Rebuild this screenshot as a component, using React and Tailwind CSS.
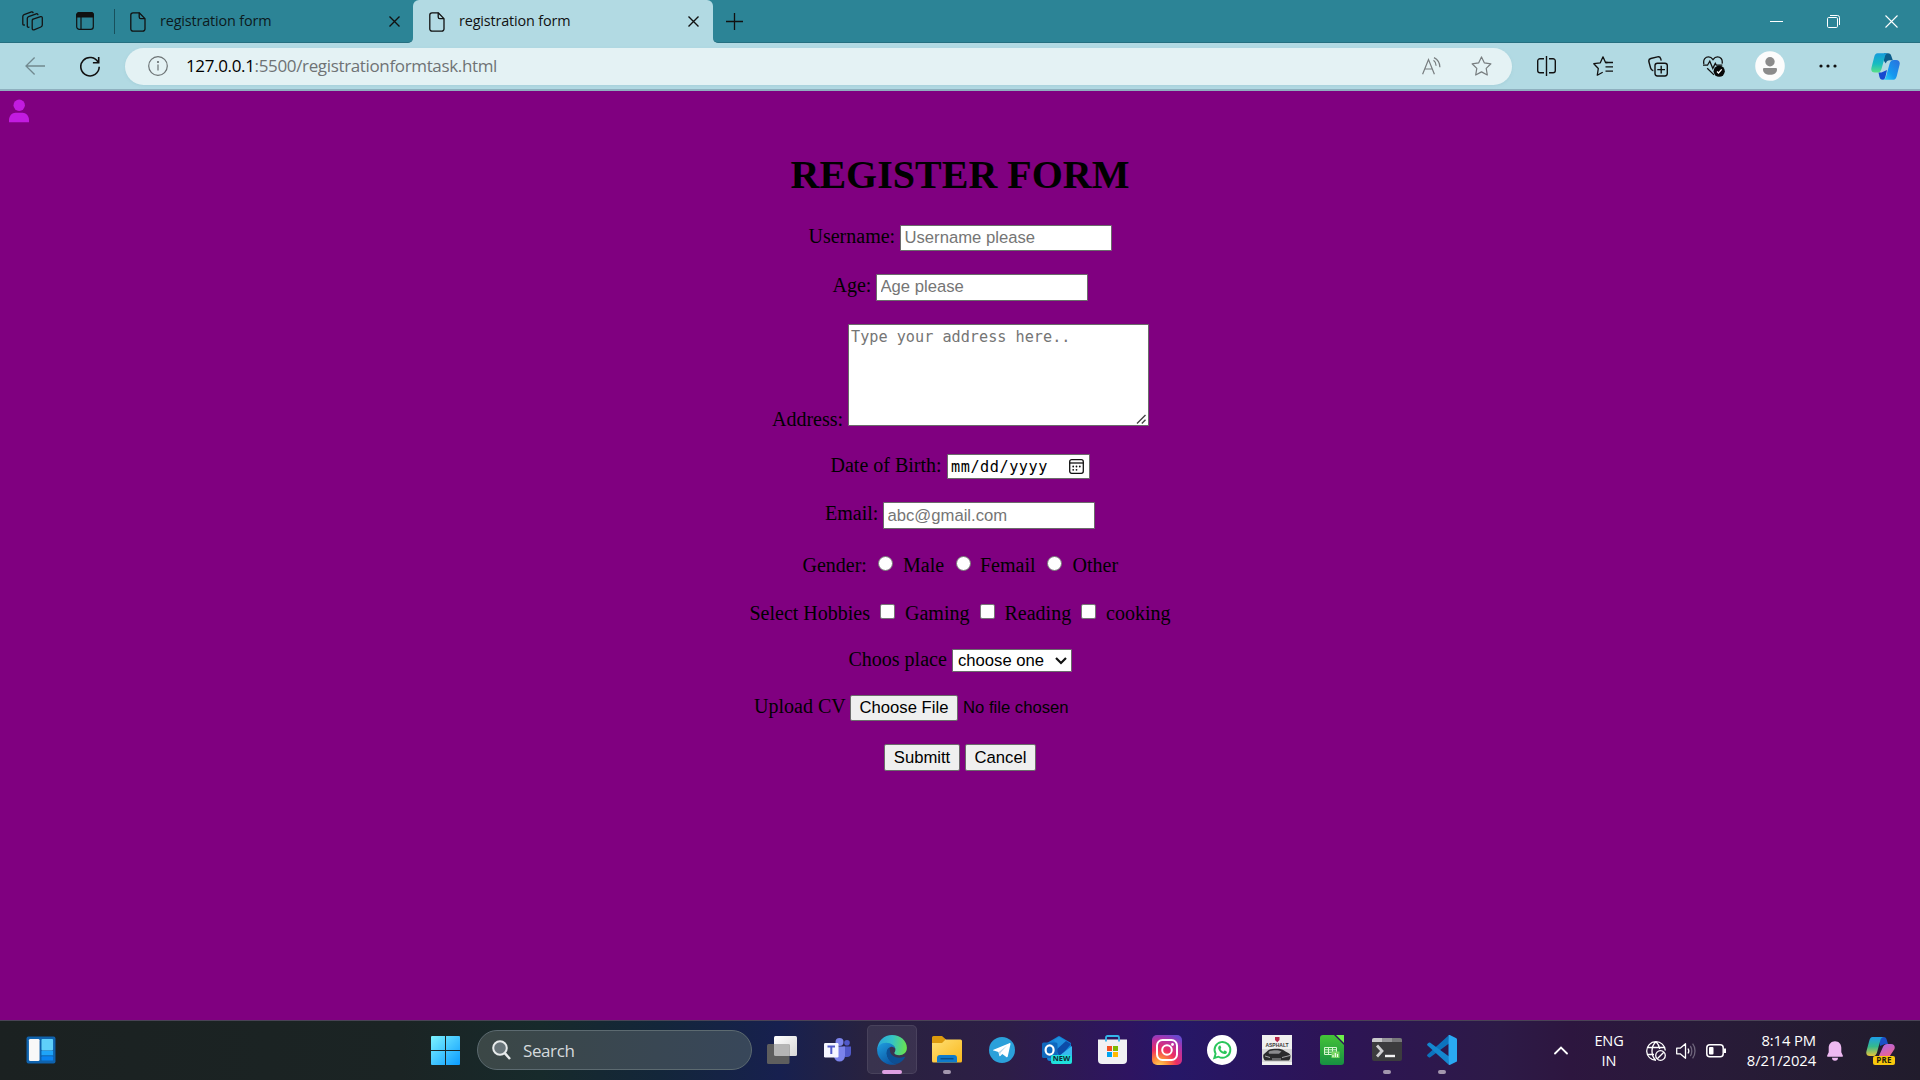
import React from "react";

const serif = "font-['Liberation_Serif',serif]";
const sans = "font-['Liberation_Sans',sans-serif]";
const ui = "font-['Open_Sans',sans-serif]";

function PageIcon() {
  return (
    <svg width="16" height="20" viewBox="0 0 16 20" fill="none" stroke="#111" strokeWidth="1.3" strokeLinejoin="round">
      <path d="M3 .8h6.2L15 6.6V17a2.2 2.2 0 0 1-2.2 2.2H3A2.2 2.2 0 0 1 .8 17V3A2.2 2.2 0 0 1 3 .8Z" />
      <path d="M9.2.8V5a1.6 1.6 0 0 0 1.6 1.6H15" />
    </svg>
  );
}

function CloseIcon() {
  return (
    <svg width="11" height="11" viewBox="0 0 11 11" stroke="#111" strokeWidth="1.4">
      <path d="M.5.5l10 10M10.5.5l-10 10" />
    </svg>
  );
}

function TabStrip() {
  return (
    <div className="flex h-[43px] bg-[#b2dae3]">
      <div className="flex h-[43px] w-[413px] items-center rounded-br-[5px] border-b border-[#256f80] bg-[#2c8496]">
        <svg className="ml-[22px]" width="21" height="20" viewBox="0 0 21 20" fill="none" stroke="#141414" strokeWidth="1.3" strokeLinejoin="round" strokeLinecap="round">
          <path d="M10.4 8.4 18.6 5.6a1.3 1.3 0 0 1 1.7 1.2v7.2a2.2 2.2 0 0 1-1.4 2l-6.9 2.8a1.3 1.3 0 0 1-1.8-1.2V9.6a1.3 1.3 0 0 1 .8-1.2Z" />
          <path d="M7 16.2l-.6.1a1.2 1.2 0 0 1-1.1-1.3V7.6a2 2 0 0 1 1.3-1.9l7.6-2.9a1.3 1.3 0 0 1 1.7.9" />
          <path d="M2.4 14l-.6.1A1.2 1.2 0 0 1 .8 12.8V5.6a2 2 0 0 1 1.3-1.9l7.4-2.8a1.3 1.3 0 0 1 1.6.8" />
        </svg>
        <svg className="ml-[33px]" width="18" height="18" viewBox="0 0 18 18" fill="none" stroke="#111" strokeWidth="1.2">
          <rect x=".7" y=".7" width="16.6" height="16.6" rx="2.6" />
          <path d="M.7 5V3A2.3 2.3 0 0 1 3 .7h12A2.3 2.3 0 0 1 17.300 3v2Z" fill="#111" />
          <path d="M5 5v12" />
        </svg>
        <div className="ml-5 h-[25px] w-px bg-[#18505c]" />
        <div className="ml-[15px] pt-px"><PageIcon /></div>
        <span className={`${ui} ml-[14px] w-[229px] text-[14.4px] leading-5 tracking-[-0.15px] text-[#0c1a1d]`}>registration form</span>
        <CloseIcon />
      </div>
      <div className="h-[43px] w-[300px] bg-[linear-gradient(#2c8496_12px,#b2dae3_12px)]">
        <div className="flex h-[43px] items-center rounded-t-[6px] bg-[#b2dae3]">
          <div className="ml-4"><PageIcon /></div>
          <span className={`${ui} ml-[14px] w-[229px] -translate-y-px text-[14.4px] leading-5 tracking-[-0.15px] text-[#111]`}>registration form</span>
          <CloseIcon />
        </div>
      </div>
      <div className="flex h-[43px] flex-1 items-center rounded-bl-[5px] border-b border-[#256f80] bg-[#2c8496]">
        <svg className="ml-[13px]" width="17" height="17" viewBox="0 0 17 17" stroke="#111" strokeWidth="1.3">
          <path d="M8.5 0v17M0 8.5h17" />
        </svg>
        <svg className="ml-auto" width="13" height="13" viewBox="0 0 13 13" stroke="#fff" strokeWidth="1">
          <path d="M0 6.500h13" />
        </svg>
        <svg className="ml-[44px]" width="13" height="13" viewBox="0 0 13 13" fill="none" stroke="#fff" strokeWidth="1">
          <rect x=".5" y="2.5" width="10" height="10" rx="1.2" />
          <path d="M3 .5h7.500a2 2 0 0 1 2 2V10" />
        </svg>
        <svg className="ml-[45px] mr-[22px]" width="13" height="13" viewBox="0 0 13 13" stroke="#fff" strokeWidth="1.1">
          <path d="M.5.5l12 12M12.5.5l-12 12" />
        </svg>
      </div>
    </div>
  );
}

function Toolbar() {
  return (
    <div className="flex h-[48px] items-center border-b-2 border-[#8fb0bf] bg-[#b2dae3]">
      <svg className="ml-[25px]" width="20" height="18" viewBox="0 0 20 18" fill="none" stroke="#71898f" strokeWidth="1.3">
        <path d="M20 9H1M9.6.5 1 9l8.6 8.5" />
      </svg>
      <svg className="ml-[35px]" width="20" height="21" viewBox="0 0 20 21" fill="none" stroke="#111" strokeWidth="1.6">
        <path d="M18.2 6.5A9.2 9.2 0 1 0 19.2 10.8" />
        <path d="M18.7 1v5.8h-5.8" />
      </svg>
      <div className="ml-[25px] flex h-[37px] w-[1387px] items-center rounded-full bg-[#e4f2f4] shadow-[0_1px_3px_#8fbcc855]">
        <svg className="ml-[23px]" width="20" height="20" viewBox="0 0 20 20" fill="none" stroke="#6c7375" strokeWidth="1.2">
          <circle cx="10" cy="10" r="9.3" />
          <path d="M10 8.6v6" />
          <circle cx="10" cy="6" r=".5" fill="#6c7375" />
        </svg>
        <span className={`${ui} ml-[18px] text-[17px] leading-6 tracking-[-0.35px] text-[#6f7375]`}>
          <span className="text-black">127.0.0.1</span>:5500/registrationformtask.html
        </span>
        <svg className="ml-auto" width="19" height="18" viewBox="0 0 19 18" fill="none" stroke="#777d7f" strokeWidth="1.2">
          <path d="M.6 17.2 6.5 2.5l5.900 14.700M2.600 12h7.800" />
          <path d="M11.5 3.2c1.500 1 2.500 3 2.600 5.500M12 .6c3 1.500 5.800 5 5.900 9.600" />
        </svg>
        <svg className="ml-[30px] mr-[20px]" width="21" height="20" viewBox="0 0 21 20" fill="none" stroke="#777d7f" strokeWidth="1.2" strokeLinejoin="round">
          <path d="M10.5.9l2.9 6 6.5.9-4.7 4.6 1.1 6.6-5.8-3.100L4.700 19l1.100-6.600L1.100 7.800l6.500-.9Z" />
        </svg>
      </div>
      <svg className="ml-[25px]" width="19" height="20" viewBox="0 0 19 20" fill="none" stroke="#111" strokeWidth="1.4">
        <path d="M9.5 0v20M7 2.700H3A2.300 2.300 0 0 0 .7 5v9.500A2.300 2.300 0 0 0 3 16.800h4M12 2.700h4A2.300 2.300 0 0 1 18.300 5v9.500a2.300 2.300 0 0 1-2.300 2.300h-4" />
      </svg>
      <svg className="ml-[37px]" width="20" height="20" viewBox="0 0 20 20" fill="none" stroke="#111" strokeWidth="1.3" strokeLinejoin="round">
        <path d="M14.5 6.500h-2L10 .8 7.300 6.800.8 7.700l4.500 4.800-1 6.700 5.400-3" />
        <path d="M12.500 6.500H20M12.500 10.800H20M12.500 15.200H20" />
      </svg>
      <svg className="ml-[35px]" width="20" height="21" viewBox="0 0 20 21" fill="none" stroke="#111" strokeWidth="1.4">
        <path d="M5.300 14.700C3.600 14.300 3 13.500 2.600 12L.9 5.800C.5 4 1.100 3 2.800 2.500L9.500.9c1.700-.4 2.700.2 3.200 1.800l.5 2" />
        <rect x="7" y="7.200" width="12.300" height="12.800" rx="2.400" />
        <path d="M13.200 9.800v7.600M9.300 13.600h7.700" />
      </svg>
      <svg className="ml-[35px]" width="22" height="21" viewBox="0 0 22 21" fill="none" stroke="#111" strokeWidth="1.3">
        <path d="M.9 8C-.2 3 2.800.9 5.500.9c2.300 0 3.500 1.300 4.500 2.700C11 2.200 12.200.9 14.500.9c2.700 0 5.500 2.100 4.600 6.800M0 9.200h4.500l2.300-4 3 7.200 2.500-5 1 1.700h6M4.200 12.200l6.800 6.700" />
        <circle cx="16.200" cy="15.200" r="5.600" fill="#080808" stroke="none" />
        <path d="M14 15.600l1.500 1.400 3.200-3.600" stroke="#fff" />
      </svg>
      <svg className="ml-[30px]" width="30" height="30" viewBox="0 0 30 30">
        <circle cx="15" cy="15" r="14.800" fill="#fcfcfc" />
        <circle cx="15" cy="10.700" r="4.700" fill="#8b8b8b" />
        <path d="M8 18.200c0-.7.600-1.200 1.300-1.200h11.400c.7 0 1.300.5 1.300 1.200 0 3.600-2.800 5.600-7 5.600s-7-2-7-5.600Z" fill="#8b8b8b" />
      </svg>
      <svg className="ml-[34px]" width="18" height="4" viewBox="0 0 18 4" fill="#111">
        <circle cx="2" cy="2" r="1.600" /><circle cx="9" cy="2" r="1.600" /><circle cx="16" cy="2" r="1.600" />
      </svg>
      <svg className="ml-[34px]" width="29" height="27" viewBox="0 0 29 27">
        <defs>
          <linearGradient id="cpA" x1="0" y1="0" x2="0" y2="1"><stop offset="0" stopColor="#159bdc" /><stop offset=".55" stopColor="#18bcc0" /><stop offset="1" stopColor="#5be086" /></linearGradient>
          <linearGradient id="cpB" x1="1" y1="0" x2="0" y2="1"><stop offset="0" stopColor="#2b6fdc" /><stop offset=".6" stopColor="#1499f0" /><stop offset="1" stopColor="#2fd3f7" /></linearGradient>
        </defs>
        <path d="M13 .3h4c1.900 0 2.800 1 3.300 2.600l1.500 4.300h-3c-2.300 0-3.300 1-4 3.300L13 8Z" fill="#0c5d8c" />
        <path d="M7.500 19.500h3L16 17l-1.500 6.500c-.5 2-1 3-2.500 3.200-2.500 0-3-1-3.600-3Z" fill="#1648d0" />
        <path d="M6.500.3h10.300c-1.800.3-2.500 1.800-3 3.700L10.500 16c-.7 2.500-2 3.600-4.300 3.600H4c-3.200 0-4.300-2-3.500-5L3.200 4C3.900 1.600 4.800.3 6.500.3Z" fill="url(#cpA)" />
        <path d="M22.500 26.700H12.200c1.800-.3 2.500-1.800 3-3.700L18.500 11c.7-2.500 2-3.900 4.300-3.900H25c3.200 0 4.300 2 3.500 5L25.800 23c-.7 2.400-1.600 3.700-3.300 3.700Z" fill="url(#cpB)" />
      </svg>
    </div>
  );
}

function Label({ children, className = "" }) {
  return <span className={`${serif} whitespace-nowrap text-[20px] leading-5 text-black ${className}`}>{children}</span>;
}

function Field({ placeholder, className = "" }) {
  return (
    <input
      placeholder={placeholder}
      className={`${sans} block w-[212px] rounded-[1px] border border-[#6b6b6b] bg-white pr-[3px] pl-[3.5px] text-[16.67px] leading-5 placeholder:text-[#757575] ${className}`}
    />
  );
}

function Radio({ className = "" }) {
  return <span className={`block size-[15px] rounded-full border border-[#767676] bg-white ${className}`} />;
}

function Check({ className = "" }) {
  return <span className={`block size-[15px] rounded-[2px] border border-[#767676] bg-white ${className}`} />;
}

const btn = `${sans} block rounded-[2px] border border-[#6b6b6b] bg-[#efefef] text-center text-[16.67px] whitespace-nowrap text-black`;

function Page() {
  return (
    <main className="flex h-[929px] flex-col bg-[#800080]">
      <div className="flex h-[47px] items-start">
        <svg className="ml-[9px] mt-2" width="20" height="24" viewBox="0 0 20 24" fill="#c21be0">
          <circle cx="10.2" cy="6.2" r="5.700" />
          <path d="M0 23.3v-2.300c0-4 3-7.200 6.500-7.200h7c3.500 0 6.500 3.200 6.500 7.200v2.300Z" />
        </svg>
      </div>
      <h1 className={`${serif} h-[87px] pt-[14px] text-center text-[40px] font-bold leading-[45px] text-black`}>REGISTER FORM</h1>

      <div className="flex h-[49px] items-start pl-[808.5px]">
        <Label className="mt-px w-[91.5px]">Username:</Label>
        <Field placeholder="Username please" className="h-[26px]" />
      </div>
      <div className="flex h-[50px] items-start pl-[832.5px]">
        <Label className="mt-px w-[43.5px]">Age:</Label>
        <Field placeholder="Age please" className="h-[27px] pb-[2px]" />
      </div>
      <div className="flex h-[130px] items-start pl-[772px]">
        <Label className="mt-[85px] w-[76px]">Address:</Label>
        <div className="flex h-[102px] w-[301px] flex-col justify-between rounded-[1px] border border-[#6b6b6b] bg-white">
          <span className="ml-[2px] mt-[2px] font-['DejaVu_Sans_Mono',monospace] text-[15.2px] leading-5 text-[#757575]">Type your address here..</span>
          <svg className="mb-px mr-[2px] self-end" width="10" height="10" viewBox="0 0 10 10" stroke="#444" strokeWidth="1.4">
            <path d="M1 9.500 9.500 1M5.800 9.500l3.700-3.700" />
          </svg>
        </div>
      </div>
      <div className="flex h-[48px] items-start pl-[830.5px]">
        <Label className="mt-[1px] w-[116.5px]">Date of Birth:</Label>
        <div className="flex h-[25px] w-[143px] items-center rounded-[1px] border border-[#6b6b6b] bg-white">
          <span className="ml-[3px] font-['DejaVu_Sans_Mono',monospace] text-[15.2px] leading-5 tracking-[0.55px] text-black">mm/dd/yyyy</span>
          <svg className="ml-auto mr-[5px]" width="15" height="15" viewBox="0 0 15 15" fill="none" stroke="#111" strokeWidth="1.3">
            <rect x=".7" y=".7" width="13.600" height="13.600" rx="2" />
            <path d="M.7 4h13.600" />
            <g fill="#111" stroke="none">
              <circle cx="4.200" cy="7.500" r=".9" /><circle cx="7.500" cy="7.500" r=".9" /><circle cx="10.800" cy="7.500" r=".9" />
              <circle cx="4.200" cy="10.800" r=".9" /><circle cx="7.500" cy="10.800" r=".9" />
            </g>
          </svg>
        </div>
      </div>
      <div className="flex h-[54px] items-start pl-[825px]">
        <Label className="mt-[1px] w-[58px]">Email:</Label>
        <Field placeholder="abc@gmail.com" className="h-[27px]" />
      </div>
      <div className="flex h-[48px] items-start pl-[802.5px]">
        <Label className="-mt-px w-[75.5px]">Gender:</Label>
        <Radio className="mr-[10px]" />
        <Label className="-mt-px w-[53px]">Male</Label>
        <Radio className="mr-[9px]" />
        <Label className="-mt-px w-[67px]">Femail</Label>
        <Radio className="mr-[10.5px]" />
        <Label className="-mt-px">Other</Label>
      </div>
      <div className="flex h-[45px] items-start pl-[749.5px]">
        <Label className="-mt-px w-[130.5px]">Select Hobbies</Label>
        <Check className="mr-[10px]" />
        <Label className="-mt-px w-[75px]">Gaming</Label>
        <Check className="mr-[9.5px]" />
        <Label className="-mt-px w-[76.5px]">Reading</Label>
        <Check className="mr-[10px]" />
        <Label className="-mt-px">cooking</Label>
      </div>
      <div className="flex h-[46px] items-start pl-[848.5px]">
        <Label className="mt-0 w-[103.5px]">Choos place</Label>
        <div className="flex h-[23px] w-[120px] items-center rounded-[1px] border border-[#6b6b6b] bg-white">
          <span className={`${sans} ml-[5px] text-[16.67px] leading-5 text-black`}>choose one</span>
          <svg className="ml-auto mr-[4px]" width="12" height="8" viewBox="0 0 12 8" fill="none" stroke="#111" strokeWidth="2.2">
            <path d="M1 1l5 5 5-5" />
          </svg>
        </div>
      </div>
      <div className="flex h-[49px] items-start pl-[754px]">
        <Label className="mt-[1px] w-[96px]">Upload CV</Label>
        <button className={`${btn} h-[26px] w-[108px] leading-[24px]`}>Choose File</button>
        <span className={`${sans} ml-[5px] text-[16.67px] leading-[26px] text-black`}>No file chosen</span>
      </div>
      <div className="flex items-start gap-[5px] pl-[884px]">
        <button className={`${btn} h-[27px] w-[76px] leading-[25px]`}>Submitt</button>
        <button className={`${btn} h-[27px] w-[71px] leading-[25px]`}>Cancel</button>
      </div>
    </main>
  );
}

function TaskIcon({ children, active, running }) {
  return (
    <div className="flex w-[55px] flex-col items-center">
      <div className={active ? "flex h-[49px] w-[50px] flex-col items-center rounded-[5px] border border-[#ffffff14] bg-[#ffffff14]" : "flex h-[49px] w-[50px] flex-col items-center border border-transparent"}>
        <div className="flex h-[48px] items-center">{children}</div>
      </div>
      {active && <div className="-mt-1 h-1 w-5 rounded-full bg-[#dea0e2]" />}
      {running && <div className="-mt-1 h-1 w-2 rounded-full bg-[#a397ae]" />}
    </div>
  );
}

function Taskbar() {
  return (
    <footer className={`${ui} flex h-[60px] border-t border-[#4a4356] bg-[linear-gradient(90deg,#1b2121_0px,#1b2424_400px,#172a2b_540px,#13263a_660px,#17204f_780px,#29223f_870px,#2d1e46_1000px,#2e1461_1130px,#261767_1175px,#2d1456_1330px,#2d1a47_1500px,#2d163f_1570px,#281b38_1720px,#211c2c_1920px)]`}>
      <svg className="ml-[26px] mt-[15px]" width="30" height="28" viewBox="0 0 31 29">
        <rect x=".5" y=".5" width="30" height="28" rx="2" fill="#0f62ad" />
        <rect x="3" y="3" width="11" height="23" rx="1.500" fill="#f8f8f8" />
        <rect x="16" y="3" width="12" height="12" rx="1" fill="#5fd0fa" />
        <rect x="16" y="15.500" width="12" height="4.500" fill="#1fa4f8" />
        <rect x="16" y="21" width="12" height="4.500" rx="1" fill="#0a82ee" />
      </svg>
      <svg className="ml-[375px] mt-[15px]" width="29" height="29" viewBox="0 0 29 29">
        <defs>
          <linearGradient id="win" x1="0" y1="0" x2="1" y2="1" gradientUnits="objectBoundingBox"><stop offset="0" stopColor="#7df3ff" /><stop offset="1" stopColor="#0a9bff" /></linearGradient>
        </defs>
        <path d="M1 0h13v14H0V1a1 1 0 0 1 1-1ZM15 0h13a1 1 0 0 1 1 1v13H15ZM0 15h14v14H1a1 1 0 0 1-1-1ZM15 15h14v13a1 1 0 0 1-1 1H15Z" fill="url(#win)" />
      </svg>
      <div className="ml-[17px] mt-[9px] flex h-[40px] w-[275px] items-center rounded-full border border-[#5c6a70] bg-[linear-gradient(90deg,#3b4746,#38475a)]">
        <svg className="ml-[14px]" width="19" height="20" viewBox="0 0 19 20" fill="none" stroke="#e8ebec" strokeWidth="2">
          <circle cx="8" cy="8" r="6.800" fill="#69757a" />
          <path d="M12.800 13.200 18 19" strokeWidth="2.500" />
        </svg>
        <span className="ml-[12px] pt-px text-[17px] leading-6 tracking-[-0.4px] text-[#d5dadd]">Search</span>
      </div>

      <div className="ml-[2.5px] mt-[4px] flex">
        <TaskIcon>
          <svg width="30" height="28" viewBox="0 0 30 28">
            <defs><linearGradient id="tv" x1="0" y1="0" x2="1" y2="1"><stop offset="0" stopColor="#fff" /><stop offset="1" stopColor="#d7d7d7" /></linearGradient></defs>
            <rect x="7" y="0" width="23" height="20" rx="1.500" fill="url(#tv)" />
            <rect x="0" y="8" width="22.500" height="20" rx="1.500" fill="#5e5e5e" />
            <path d="M7 8h15.500v12H8.500A1.500 1.500 0 0 1 7 18.500Z" fill="#b5b5b5" />
          </svg>
        </TaskIcon>
        <TaskIcon>
          <svg width="27" height="24" viewBox="0 0 27 24">
            <circle cx="15.500" cy="4" r="4" fill="#7b83eb" /><circle cx="23" cy="4.800" r="2.800" fill="#5059c9" />
            <path d="M19 8.500h8V15a4 4 0 0 1-4 4h-2Z" fill="#5059c9" />
            <path d="M10 8.500h11V18a5.500 5.500 0 0 1-11 0Z" fill="#7b83eb" />
            <rect x="0" y="5" width="14.500" height="14.500" rx="1.200" fill="#f5f6ff" />
            <path d="M3.500 8.500h7.500M7.300 8.500V16" stroke="#5059c9" strokeWidth="2" />
          </svg>
        </TaskIcon>
        <TaskIcon active>
          <svg width="30" height="30" viewBox="0 0 30 30">
            <defs>
              <linearGradient id="eg" x1="0" y1=".3" x2="1" y2=".4"><stop offset="0" stopColor="#2aa6dc" /><stop offset=".5" stopColor="#35c3c5" /><stop offset="1" stopColor="#69e34f" /></linearGradient>
              <linearGradient id="eb" x1="0" y1="0" x2=".6" y2="1"><stop offset="0" stopColor="#1f9ee0" /><stop offset="1" stopColor="#0b57a4" /></linearGradient>
            </defs>
            <path d="M.2 14.500C.9 6 7 .1 15 .1c8.600 0 14.900 6 14.900 12.700 0 4.700-3.500 7.500-7.500 7.500-3.300 0-5.100-1-5.100-2.200 0-.8 1.100-1.100 1.100-3.300 0-3-2.600-5.200-6-5.200-6.500 0-10.500 3-12.200 4.900Z" fill="url(#eg)" />
            <path d="M.1 15C.5 11 4 7.600 9.300 7.700c5 0 8.700 3 9.100 6.500-.7-1.800-2.700-2.700-4.300-2.400C10.500 13 9 17 10.300 21c1.400 4.300 5 7.600 9.700 7.900A14.900 14.900 0 0 1 .1 15Z" fill="url(#eb)" />
            <path d="M12.300 12.500c-2.600 1.700-3.300 5-2.200 8.500 1.500 4.700 5.700 8.300 10.300 7.800 3.200-1.200 6-3.700 7.500-6.300.3-.6-.2-.9-.7-.7-6.600 2.700-13.800-.5-14.300-6-.1-1.300.1-2.500-.6-3.300Z" fill="#0c4f95" />
          </svg>
        </TaskIcon>
        <TaskIcon running>
          <svg width="30" height="27" viewBox="0 0 30 27">
            <defs><linearGradient id="fo" x1="0" y1="0" x2="1" y2="1"><stop offset="0" stopColor="#ffdf73" /><stop offset="1" stopColor="#f9b81d" /></linearGradient></defs>
            <path d="M0 1.500A1.500 1.500 0 0 1 1.500 0H10l4 3.500V12H0Z" fill="#dd9a0e" />
            <path d="M0 7h10l3.500-3.500h15A1.500 1.500 0 0 1 30 5v20a1.500 1.500 0 0 1-1.500 1.500h-27A1.500 1.500 0 0 1 0 25Z" fill="url(#fo)" />
            <path d="M5 26.500V22a3 3 0 0 1 3-3h14a3 3 0 0 1 3 3v4.500Z" fill="#0f7bcb" />
            <path d="M8.500 22.700h13" stroke="#0a4f8b" strokeWidth="1.500" />
          </svg>
        </TaskIcon>
        <TaskIcon>
          <svg width="26" height="26" viewBox="0 0 26 26">
            <circle cx="13" cy="13" r="13" fill="#2ba0da" />
            <path d="M4.500 12.700 20.300 6.200c.8-.3 1.400.2 1.100 1.300L18.800 19.300c-.2.9-.8 1.100-1.500.7l-4-3-2 1.900c-.5.5-.9.500-1-.3l-.9-3.600-4.800-1.400c-.8-.3-.8-.6-.1-.9Z" fill="#fff" />
            <path d="m9.900 15 8.200-6.500-6.600 7.300-.3 2.800Z" fill="#b7d7ea" />
          </svg>
        </TaskIcon>
        <TaskIcon>
          <div className="relative">
            <svg width="30" height="28" viewBox="0 0 30 28">
              <path d="M5 7 16 .4a2 2 0 0 1 2 0L29 7v15a3 3 0 0 1-3 3H8a3 3 0 0 1-3-3Z" fill="#1283da" />
              <path d="M12 4 17 1l10 6-10 7Z" fill="#1f8ede" />
              <path d="m14 14 10-9 5 3-11 13Z" fill="#0c4ba8" />
              <path d="m17 20 13-10v14H17Z" fill="#38b9ee" />
              <rect x="0" y="6.500" width="15.500" height="15.500" rx="1.500" fill="#1068bd" />
              <ellipse cx="7.600" cy="14" rx="4" ry="4.600" fill="none" stroke="#fff" strokeWidth="2.200" />
            </svg>
            <span className="absolute bottom-0 left-[9px] flex h-[9px] w-[21px] items-center justify-center rounded-[2px] bg-[#20e0dc] text-[7.5px] font-bold leading-none text-[#102a33]">NEW</span>
          </div>
        </TaskIcon>
        <TaskIcon>
          <svg width="29" height="29" viewBox="0 0 29 29">
            <path d="M0 4.500h29V25a4 4 0 0 1-4 4H4a4 4 0 0 1-4-4Z" fill="#f1f1f3" />
            <path d="M8 6.500V2.500A1.500 1.500 0 0 1 9.500 1h10A1.500 1.500 0 0 1 21 2.500v4" fill="none" stroke="#35b6ea" strokeWidth="1.800" />
            <path d="M9 11h5v5H9Z" fill="#f25022" /><path d="M15 11h5v5h-5Z" fill="#7fba00" />
            <path d="M9 17h5v5H9Z" fill="#00a4ef" /><path d="M15 17h5v5h-5Z" fill="#ffb900" />
          </svg>
        </TaskIcon>
        <TaskIcon>
          <svg width="30" height="30" viewBox="0 0 30 30">
            <defs>
              <radialGradient id="ig" cx=".25" cy="1.05" r="1.15"><stop offset="0" stopColor="#ffd65c" /><stop offset=".25" stopColor="#fd8a3a" /><stop offset=".5" stopColor="#ee2d62" /><stop offset=".8" stopColor="#b432a8" /><stop offset="1" stopColor="#6a48cf" /></radialGradient>
            </defs>
            <rect width="30" height="30" rx="5" fill="url(#ig)" />
            <g fill="none" stroke="#fff" strokeWidth="2"><rect x="5" y="5" width="20" height="20" rx="5.500" /><circle cx="15" cy="15" r="4.800" /></g>
            <circle cx="20.500" cy="9.500" r="1.400" fill="#fff" />
          </svg>
        </TaskIcon>
        <TaskIcon>
          <svg width="30" height="30" viewBox="0 0 30 30">
            <circle cx="15" cy="15" r="15" fill="#fff" />
            <path d="M7.300 23 8.600 18.800a7.900 7.900 0 1 1 2.900 2.900Z" fill="none" stroke="#2bc65c" strokeWidth="1.900" />
            <path d="M12.300 10.700c.4-.4 1-.3 1.200.1l.7 1.700c.1.300 0 .6-.2.800l-.6.700c.7 1.300 1.700 2.200 3 2.700l.8-.9c.2-.3.500-.3.800-.2l1.600.8c.4.200.4.600.3 1-.3 1.200-1.500 1.800-2.700 1.600-3.200-.6-5.400-2.900-6-5.500-.2-1 .3-2.200 1.100-2.800Z" fill="#2bc65c" />
          </svg>
        </TaskIcon>
        <TaskIcon>
          <div className="relative">
            <svg width="30" height="30" viewBox="0 0 30 30">
              <rect width="30" height="30" fill="#f0f0f0" />
              <rect y="14" width="30" height="13" fill="#d6d6d6" />
              <path d="M13 2h4.500v3l-2.200 2.200L13 5Z" fill="#b7284a" />
              <path d="M1.500 19.500c2.500-1.500 4-5 8.500-5.500 6-.600 10-.3 12 1.500 1.500 1.300 5.500 2.300 6.300 4.500.5 2-.3 4.500-1.300 5.500H3c-1.500-1.500-2.200-4-1.500-6Z" fill="#2a2a2c" />
              <path d="M6.500 17c2-2 10-2.500 13-.5l-2.500 2.300H7Z" fill="#8b8b8e" />
              <path d="M3 21l5 1.500M28 20.500 20 22.500M10 24h9" stroke="#a5a5a8" strokeWidth="1" />
            </svg>
            <span className="absolute left-0 top-[7px] w-[30px] text-center font-['Liberation_Sans',sans-serif] text-[5px] font-bold leading-[6px] text-[#3a3a3a]">ASPHALT</span>
          </div>
        </TaskIcon>
        <TaskIcon>
          <svg width="24" height="30" viewBox="0 0 24 30">
            <defs><linearGradient id="lc" x1=".5" y1="0" x2=".5" y2="1"><stop offset="0" stopColor="#45c437" /><stop offset="1" stopColor="#178f42" /></linearGradient></defs>
            <path d="M3 0h11l10 10v17a3 3 0 0 1-3 3H3a3 3 0 0 1-3-3V3a3 3 0 0 1 3-3Z" fill="url(#lc)" />
            <path d="M16 0h8v8Z" fill="#6df04a" />
            <g fill="none" stroke="#d8f7cf" strokeWidth="1"><path d="M4.500 12.500h12v7h-12ZM4.500 14.800h12M4.500 17.200h12M8.500 12.500v7M12.500 12.500v7" /></g>
            <rect x="11.500" y="16.500" width="8" height="6.500" fill="#7ad764" /><path d="M13 22v-2M15.300 22v-4M17.600 22v-3" stroke="#fff" strokeWidth="1" />
          </svg>
        </TaskIcon>
        <TaskIcon running>
          <svg width="30" height="23" viewBox="0 0 30 23">
            <rect width="30" height="23" rx="2" fill="#3c3c3e" />
            <path d="M2 0h8v4H0V2a2 2 0 0 1 2-2Z" fill="#c9c9cb" /><path d="M10 0h10v4H10Z" fill="#97979a" /><path d="M20 0h8a2 2 0 0 1 2 2v2H20Z" fill="#77777a" />
            <path d="m5 7.500 5 5.500-5 5.500" fill="none" stroke="#cfcfd1" strokeWidth="2.800" /><path d="M13 18h10" stroke="#f3f3f3" strokeWidth="2.400" />
          </svg>
        </TaskIcon>
        <TaskIcon running>
          <svg width="30" height="30" viewBox="0 0 30 30">
            <path d="M.5 21.300a1.200 1.200 0 0 1 0-1.700L21.500.6 22 8.500 3.300 22.300a1.300 1.300 0 0 1-1.600 0Z" fill="#0c73bd" />
            <path d="M.5 8.700a1.200 1.200 0 0 0 0 1.700l21 19 .5-7.900L3.300 7.700a1.300 1.300 0 0 0-1.600 0Z" fill="#1487cf" />
            <path d="M21.500.3c.5-.4 1.200-.4 1.800-.1l5.600 2.700c.7.300 1.100 1 1.100 1.700v20.800c0 .7-.4 1.400-1.100 1.700l-5.600 2.700c-.6.300-1.300.2-1.800-.2Z" fill="#2aa9f3" />
          </svg>
        </TaskIcon>
      </div>

      <div className="flex flex-1 items-center text-white">
        <svg className="ml-[84.5px]" width="14" height="9" viewBox="0 0 14 9" fill="none" stroke="#fff" strokeWidth="1.8" strokeLinecap="round"><path d="M1 7.500 7 1.500l6 6" /></svg>
        <div className="ml-[22px] flex w-[38px] flex-col items-center text-[14.5px] leading-5 tracking-[-0.1px]"><span>ENG</span><span>IN</span></div>
        <svg className="ml-[18px]" width="20" height="20" viewBox="0 0 20 20" fill="none" stroke="#fff" strokeWidth="1.3">
          <path d="M10 19.300A9.300 9.300 0 1 1 19.300 9.500M10 .7C7.300 3 6 6.500 6 10s1.300 7 3.500 9M10 .7c2 1.800 3.200 4.300 3.700 7.300M1.500 6.500h17M1.500 13.500H8" />
          <circle cx="14.500" cy="14.500" r="4.800" /><path d="m11.300 17.800 6.500-6.500" />
        </svg>
        <svg className="ml-[10px]" width="20" height="18" viewBox="0 0 20 18" fill="none" stroke="#fff" strokeWidth="1.3" strokeLinejoin="round">
          <path d="M.7 6.200h3.500L9.500 1.700v14.600l-5.300-4.500H.7Z" /><path d="M12 6.500c1 1.500 1 3.500 0 5" /><path d="M14.300 4c2 2.800 2 7.200 0 10M16.600 1.700c3.200 4 3.200 10.600 0 14.600" stroke="#6f667c" />
        </svg>
        <svg className="ml-[10px]" width="20" height="14" viewBox="0 0 20 14" fill="none" stroke="#fff" strokeWidth="1.5">
          <rect x=".8" y=".8" width="16.400" height="12" rx="3" /><rect x="3" y="3" width="4.500" height="7.600" rx="1" fill="#fff" stroke="none" /><path d="M19 4.500v4.500" strokeWidth="2" />
        </svg>
        <div className="ml-[10px] flex w-[80px] -translate-y-px flex-col items-end whitespace-nowrap text-[14.8px] leading-5 tracking-[-0.1px]"><span>8:14 PM</span><span>8/21/2024</span></div>
        <svg className="ml-[11px]" width="16" height="20" viewBox="0 0 16 20" fill="#efb9f2">
          <path d="M8 .2c3.800 0 6.300 2.900 6.300 6.500v4.500l1.600 3.500c.2.600-.1 1.100-.7 1.100H.8c-.6 0-.9-.5-.7-1.100l1.600-3.500V6.700C1.700 3.100 4.200.2 8 .2ZM5 16.800h6a3 3 0 0 1-6 0Z" />
        </svg>
        <div className="relative ml-[23px]">
          <svg width="29" height="28" viewBox="0 0 29 28">
            <defs>
              <linearGradient id="pa" x1="0" y1="0" x2="0" y2="1"><stop offset="0" stopColor="#1d9ee8" /><stop offset=".5" stopColor="#35b98c" /><stop offset="1" stopColor="#e9c43a" /></linearGradient>
              <linearGradient id="pb" x1="0" y1="0" x2=".5" y2="1"><stop offset="0" stopColor="#a565f0" /><stop offset="1" stopColor="#f0638c" /></linearGradient>
            </defs>
            <path d="M13 0h4.500c2 0 2.800 1.200 3.300 3l1.200 4h-3L14 9Z" fill="#1b50c8" />
            <path d="M6.500 0h11c-2 .3-2.800 1.800-3.300 3.700L11 15.500c-.7 2.500-2 3.600-4.300 3.600H4c-3.200 0-4.300-2-3.500-5L3.200 4C3.900 1.500 4.800 0 6.500 0Z" fill="url(#pa)" />
            <path d="M22.500 21H12l4.500-10c1-2.500 2.500-4 4.800-4H25c3.200 0 4.300 2 3.500 5Z" fill="url(#pb)" />
          </svg>
          <span className="absolute bottom-0 left-[7px] flex h-[9px] w-[22px] items-center justify-center rounded-[2px] bg-[#f8c80d] text-[8px] font-bold leading-none tracking-[0.3px] text-[#221c08]">PRE</span>
        </div>
      </div>
    </footer>
  );
}

export default function App() {
  return (
    <div className="flex h-[1080px] w-[1920px] flex-col overflow-hidden bg-[#800080]">
      <TabStrip />
      <Toolbar />
      <Page />
      <Taskbar />
    </div>
  );
}
